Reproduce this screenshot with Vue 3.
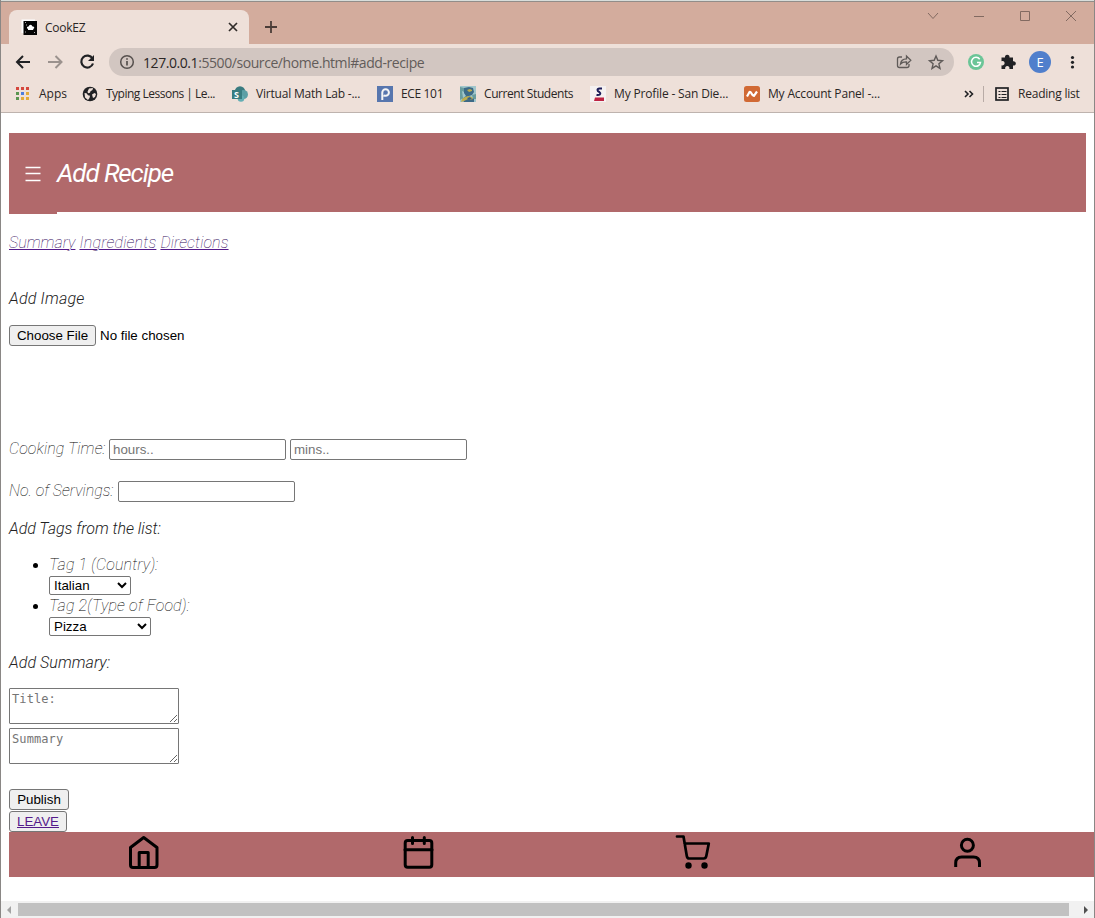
<script setup>
const tagOptions = ['Italian', 'American', 'Mexican']
const foodOptions = ['Pizza', 'Pasta', 'Salad']
</script>

<template>
  <div class="window">
    <div class="strip">
      <div class="tab">
        <svg class="favicon" viewBox="21 19 17 17" width="17" height="17">
          <path d="M21.5 19.5H35V33H21.5z" fill="#fff" />
          <path d="M23.500 21H37v14H23.500z" fill="#050505" />
          <path d="M28 30v-1q-1.500-.5-1-1.800.7-1 1.600-.7.500-1.800 1.900-1.800t2 1.800q1.200-.3 1.700.7.400 1.300-1 1.800v1z" fill="#fff" />
          <path d="M25 22.500h1M26 25h1M25 32h1M34 32.500h1" stroke="#aaa" />
        </svg>
        <span class="t tabname">CookEZ</span>
        <svg class="x" viewBox="228 22 10 10" width="10" height="10"><path d="M229 23l8 8M237 23l-8 8" stroke="#302b29" stroke-width="1.7" /></svg>
      </div>
      <svg class="plus" viewBox="264 20 14 14" width="14" height="14"><path d="M271 21v12M265 27h12" stroke="#4b3d38" stroke-width="1.800" /></svg>
      <svg class="controls" viewBox="925 8 156 16" width="156" height="16" fill="none" stroke="#826a61">
        <path d="M928 13l5 5.500 5-5.500M974 16.500h10M1020.500 11.500h9v9h-9zM1066 11l10 10M1076 11l-10 10" />
      </svg>
    </div>

    <div class="toolbar">
      <svg class="arrows" viewBox="14 52 84 20" width="84" height="20" fill="none" stroke-width="2">
        <path d="M30 62H17.500M23 56l-6 6 6 6" stroke="#202124" />
        <path d="M48 62h13M55.500 56l6 6-6 6" stroke="#9b928e" />
        <path d="M92.500 58.500A6 6 0 1 0 93 63.500" stroke="#202124" stroke-width="2.200" />
        <path d="M94 55v6h-6z" fill="#202124" />
      </svg>
      <div class="omnibox">
        <svg viewBox="119 54 16 16" width="16" height="16" fill="none" stroke="#56504e" stroke-width="1.500">
          <circle cx="127" cy="62" r="6.300" /><path d="M127 61v4.500M127 58.200v1.600" stroke-width="1.700" />
        </svg>
        <span class="t url">127.0.0.1<i>:5500/source/home.html#add-recipe</i></span>
        <svg class="omni-right" viewBox="894 53 52 18" width="52" height="18" fill="none" stroke="#5f5a58" stroke-width="1.300">
          <path d="M902 57h-2.500q-2 0-2 2v6.500q0 2 2 2h7.500q2 0 2-2v-1.500" />
          <path d="M900.500 64q.5-5 6-5.200v-2.800l4.300 4.200-4.300 4.200v-2.600q-4-.2-6 2.200z" />
          <path d="M936 56l1.800 4.300 4.700.4-3.600 3.100 1.100 4.600-4-2.500-4 2.500 1.100-4.600-3.600-3.100 4.700-.4z" stroke-width="1.400" />
        </svg>
      </div>
      <svg class="ext" viewBox="966 50 114 24" width="114" height="24">
        <circle cx="976" cy="62" r="8" fill="#6bc597" />
        <path d="M979.700 59.200a4.500 4.500 0 1 0 .8 3.300H977" fill="none" stroke="#fff" stroke-width="1.500" />
        <path d="M1001.500 57.500h3.500a2.300 2.300 0 1 1 4.500 0h3.500v3.800a2.200 2.200 0 1 1 0 4.200v3.500h-3.700a2.200 2.200 0 1 0-4 0h-3.800v-3.800a2.200 2.200 0 1 0 0-4z" fill="#202124" />
        <circle cx="1040" cy="62" r="11" fill="#507fcc" />
        <text x="1036.500" y="66.800" fill="#fff" font-size="13" font-family="Open Sans, sans-serif">E</text>
        <g fill="#202124"><circle cx="1072.500" cy="57.500" r="1.600" /><circle cx="1072.500" cy="62.300" r="1.600" /><circle cx="1072.500" cy="67" r="1.600" /></g>
      </svg>
    </div>

    <div class="bookmarks t">
      <div class="bm">
        <svg viewBox="0 0 16 16" width="16" height="16">
          <path d="M1 1h3v3H1zM6 1h3v3H6zM11 1h3v3h-3z" fill="#d5473d" />
          <path d="M1 6h3v3H1zM1 11h3v3H1z" fill="#599550" /><path d="M6 6h3v3H6z" fill="#4c7de0" />
          <path d="M11 6h3v3h-3zM6 11h3v3H6zM11 11h3v3h-3z" fill="#e3aa3a" />
        </svg><span class="l1">Apps</span>
      </div>
      <div class="bm">
        <svg viewBox="0 0 16 16" width="16" height="16"><circle cx="8" cy="8" r="7.300" fill="#202124" /><path d="M2.500 7l2 .2 1.500 2 2 .6-.5 2.200-1.500 2-3-2.500zM7 2.500l4-.5-.5 2-2 1.200-.5 1.500-2 .5-.5-1.500zM10 8.500l2.500-1.500 1.500 1-1 3-2 1z" fill="#eee0d9" /></svg><span class="l2">Typing Lessons | Le...</span>
      </div>
      <div class="bm">
        <svg viewBox="0 0 16 16" width="16" height="16"><circle cx="8" cy="5.500" r="5.200" fill="#397b80" /><circle cx="11.500" cy="8.500" r="4.500" fill="#5b9fa5" /><circle cx="9" cy="12.500" r="3.300" fill="#63aeb4" /><path d="M0 4h10v9H0z" fill="#377c80" /><text x="2" y="11.500" font-size="9" font-weight="bold" fill="#fff">S</text></svg><span class="l3">Virtual Math Lab -...</span>
      </div>
      <div class="bm">
        <svg viewBox="0 0 16 16" width="16" height="16"><path d="M0 0h16v16H0z" fill="#5776ae" /><path d="M5.300 14V6.500a3.300 3.300 0 1 1 3.300 3.300q-1 0-2-.5" fill="none" stroke="#f5f5f5" stroke-width="2" /></svg><span class="l4">ECE 101</span>
      </div>
      <div class="bm">
        <svg viewBox="0 0 16 16" width="16" height="16"><path d="M0 0h16v16H0z" fill="#a1c6cb" /><path d="M0 1l4 1 1 2-1 2-2-1 1 7-3 2zM12 9l4-1v5h-3z" fill="#699c9e" /><path d="M4 2l5-1 4 1 1 4-2 3-3 1 5 3v3H4l-2-3 4-3-2-3z" fill="#3d6a87" /><path d="M7 4l3-1 2 1v1l-3 1zM5 11l3-1 4 1 1 2-3 1-2-1-4 2-3 1 1-3z" fill="#c0ae4c" /><path d="M7 12l3-1 2 2-3 1z" fill="#365f85" /></svg><span class="l5">Current Students</span>
      </div>
      <div class="bm">
        <svg viewBox="0 0 16 16" width="16" height="16"><path d="M0 0h16v16H0z" fill="#f5f1f1" /><path d="M12 2.500H9.500Q7.500 2.700 7.500 4T9.300 6q1.700 1.300.5 2.500-1 .8-3.300.5" fill="none" stroke="#1c1c58" stroke-width="2" /><path d="M5 11.500h9V15H4z" fill="#bd2342" /></svg><span class="l6">My Profile - San Die...</span>
      </div>
      <div class="bm">
        <svg viewBox="0 0 16 16" width="16" height="16"><rect width="16" height="16" rx="2.500" fill="#d16934" /><path d="M3 10.500L5.500 6 Q6.500 5.500 7.500 7.500T10 9.800L13 5.500" fill="none" stroke="#fff" stroke-width="2.200" /></svg><span class="l7">My Account Panel -...</span>
      </div>
      <div class="bm-right">
        <svg viewBox="962 86 50 16" width="50" height="16" fill="none" stroke="#202124">
          <path d="M965 91l3 3-3 3M969.500 91l3 3-3 3" stroke-width="1.600" /><path d="M983.500 86v16" stroke="#b8aba6" />
          <rect x="996" y="88" width="12" height="12" stroke-width="1.700" /><path d="M998.500 91.500h2M998.500 94.500h2M998.500 97.500h2M1001.500 91.500h5M1001.500 94.500h5M1001.500 97.500h5" />
        </svg><span class="l8">Reading list</span>
      </div>
    </div>

    <main class="page">
      <header class="hero">
        <div class="menu"><svg viewBox="25 165 16 17" width="16" height="17"><path d="M25.500 167.500h15M25.500 173.500h15M25.500 180.500h15" stroke="#fff" stroke-width="1.500" /></svg></div>
        <h1>Add Recipe</h1>
      </header>
      <nav class="links thin"><a class="a1">Summary</a><a class="a2">Ingredients</a><a class="a3">Directions</a></nav>
      <h2 class="h-image">Add Image</h2>
      <div class="file"><button>Choose File</button><span>No file chosen</span></div>
      <div class="row time"><label class="thin">Cooking Time:</label><input placeholder="hours.." /><input placeholder="mins.." /></div>
      <div class="row serv"><label class="thin">No. of Servings:</label><input /></div>
      <h2 class="h-tags">Add Tags from the list:</h2>
      <ul>
        <li><label class="thin g1">Tag 1 (Country):</label><select class="s1"><option v-for="o in tagOptions" :key="o">{{ o }}</option></select></li>
        <li><label class="thin g2">Tag 2(Type of Food):</label><select class="s2"><option v-for="o in foodOptions" :key="o">{{ o }}</option></select></li>
      </ul>
      <h2 class="h-sum">Add Summary:</h2>
      <textarea placeholder="Title:"></textarea>
      <textarea placeholder="Summary"></textarea>
      <button class="publish">Publish</button>
      <button class="leave"><a>LEAVE</a></button>
      <footer>
        <svg viewBox="121 832 45 45" width="45" height="45"><path d="M130.500 847.500V865a2.500 2.500 0 0 0 2.500 2.500h21.500a2.500 2.500 0 0 0 2.500-2.500V847.500L143.700 837.500zM139.200 867V852.500h9V867" /></svg>
        <svg viewBox="396 832 45 45" width="45" height="45"><rect x="405.200" y="840.500" width="26.600" height="26.800" rx="2.500" /><path d="M405 849.700h27M412.500 837.500v6M424.300 837.500v6" stroke-linecap="round" /></svg>
        <svg viewBox="669.500 832 45 45" width="45" height="45"><path d="M676.500 836.500h6.500l3.300 19.500q.4 2.500 2.500 2.500h14.500q2 0 2.500-2.500l2.500-12.500H684" stroke-linecap="round" stroke-width="2.700" /><circle class="wheel" cx="688" cy="865.500" r="3.200" /><circle class="wheel" cx="704" cy="865.500" r="3.200" /></svg>
        <svg viewBox="945 832 45 45" width="45" height="45"><circle cx="967.400" cy="845.300" r="6" /><path d="M955.700 867v-4q0-6 6-6h11.800q6 0 6 6v4" /></svg>
      </footer>
    </main>
    <div class="scroll"><svg viewBox="0 0 6 8" width="6" height="8"><path d="M5 0v8L1 4z" fill="#a3a3a3" /></svg><div class="thumb"></div><svg viewBox="0 0 6 8" width="6" height="8"><path d="M1 0v8l4-4z" fill="#505050" /></svg></div>
  </div>
</template>

<style>
html, body { margin: 0; overflow: hidden; background: #fff; }
</style>
<style scoped>
* { box-sizing: border-box; }
svg { display: block; flex: none; }
.window { width: 1095px; height: 918px; border: 1px solid #8a8785; border-top: 0; border-bottom: 0; display: flex; flex-direction: column; overflow: hidden; background: #fff; }
.t { font-family: "Open Sans", "Noto Sans", sans-serif; font-size: 12px; color: #2a2625; white-space: nowrap; }
.strip { height: 44px; background: #d3ac9d; display: flex; flex: none; padding-left: 8px; border-top: 1px solid #d8dedb; box-shadow: inset 0 1px #928d89; }
.tab { margin-top: 9px; width: 240px; height: 34px; background: #eee0d9; border-radius: 8px 8px 0 0; display: flex; align-items: center; padding: 0 11px 0 12px; }
.tabname { margin-left: 7px; letter-spacing: -.25px; }
.x { margin-left: auto; }
.plus { margin: 19px 0 0 15px; }
.controls { margin: 7px 13px 0 auto; }
.toolbar { height: 37px; background: #eee0d9; display: flex; align-items: center; padding: 0 0 1px 13px; flex: none; }
.arrows { margin-right: 11px; }
.omnibox { width: 845px; height: 28px; border-radius: 14px; background: #d2c6c1; display: flex; align-items: center; padding: 0 8px 0 10px; }
.url { margin-left: 8px; font-size: 14px; letter-spacing: -.43px; }
.url i { font-style: normal; color: #625c5a; }
.omni-right { margin-left: auto; }
.ext { margin-left: 12px; }
.bookmarks { height: 32px; background: #eee0d9; border-bottom: 1px solid #beb3ae; display: grid; grid-template-columns: 67px 150px 145px 83px 130px 154px 218px 1fr; align-items: center; padding: 0 0 5px 14px; flex: none; }
.bm, .bm-right { display: flex; align-items: center; gap: 8px; }
.bm span, .bm-right span { line-height: 16px; }
.bm-right { gap: 6px; }
.l2 { letter-spacing: -.5px; } .l3 { letter-spacing: -.2px; } .l4 { letter-spacing: -.35px; } .l5 { letter-spacing: -.42px; }
.l6 { letter-spacing: -.16px; } .l7 { letter-spacing: -.18px; } .l8 { letter-spacing: -.22px; }
.page { flex: 1; padding: 20px 0 0 8px; font-family: "Liberation Sans", Arial, sans-serif; font-size: 13.333px; }
.hero { width: 1077px; height: 79px; background: #b1696b; color: #fff; display: flex; align-items: center; }
.menu { width: 48px; height: 81px; background: #b1696b; padding: 32px 0 0 16px; align-self: flex-start; }
h1, h2, .thin { font-family: Roboto, "Open Sans", sans-serif; font-style: italic; white-space: nowrap; }
h1 { font-size: 26px; font-weight: 400; margin: 0; letter-spacing: -1.1px; }
h2 { font-size: 16px; font-weight: 300; margin: 0; height: 20px; line-height: 20px; color: #222; }
.thin { font-size: 16px; font-weight: 100; color: #000; }
.links { display: flex; gap: 4px; height: 20px; line-height: 20px; margin-top: 21px; }
.links a { text-decoration: underline; text-decoration-thickness: 1px; color: #2e0659; text-decoration-color: #551a8b; }
.a2 { letter-spacing: .22px; } .a3 { letter-spacing: .12px; }
.h-image { margin-top: 36px; letter-spacing: .2px; }
.file { display: flex; align-items: center; gap: 4px; margin-top: 16px; height: 21px; }
button { font: 13.333px "Liberation Sans", Arial, sans-serif; height: 21px; border: 1px solid #767676; border-radius: 3px; background: #efefef; color: #000; padding: 0 0 1px; display: block; }
.file button { width: 87px; }
.row { display: flex; height: 21px; gap: 4px; align-items: center; }
.row label { line-height: 20px; margin-top: -1px; }
.time { margin-top: 93px; }
.serv { margin-top: 21px; }
input { width: 177px; height: 21px; border: 1px solid #767676; border-radius: 2px; padding: 1px 3px; font: 13.333px "Liberation Sans", Arial, sans-serif; }
input::placeholder, textarea::placeholder { color: #757575; }
.time label { width: 96px; letter-spacing: .1px; }
.serv label { width: 105px; }
.h-tags { margin-top: 17px; letter-spacing: -.04px; }
ul { margin: 15px 0 0; padding: 0 0 0 40px; font-size: 16px; }
li { height: 41px; line-height: 21px; }
li label { display: inline-block; height: 21px; vertical-align: top; letter-spacing: .17px; }
select { display: block; height: 19px; margin-top: 1px; border: 1px solid #767676; border-radius: 2px; background: #fff; color: #000; font: 13.333px "Liberation Sans", Arial, sans-serif; padding: 0 0 1px; }
.s1 { width: 82px; } .s2 { width: 102px; }
.h-sum { margin-top: 17px; letter-spacing: .06px; }
textarea { display: block; width: 170px; height: 36px; border: 1px solid #767676; border-radius: 1px; padding: 3px 2px 1px; margin: 0 0 4px; font: 12px "DejaVu Sans Mono", monospace; letter-spacing: .1px; overflow: hidden; }
.h-sum + textarea { margin-top: 15px; }
.publish { width: 60px; margin-top: 25px; }
.leave { width: 58px; margin-top: 1px; }
.leave a { color: #551a8b; text-decoration: underline; }
footer { height: 45px; background: #b1696b; display: flex; gap: 229.700px; padding-left: 112px; overflow: hidden; }
footer svg { fill: none; stroke: #000; stroke-width: 3; stroke-linejoin: round; }
.wheel { fill: #000; stroke: none; }
.scroll { height: 17px; flex: none; background: #f1f1f1; display: flex; align-items: center; padding: 0 5px; gap: 6px; }
.thumb { flex: none; width: 1051px; height: 13px; background: #c1c1c1; }
.scroll svg:last-child { margin-left: auto; }
</style>
